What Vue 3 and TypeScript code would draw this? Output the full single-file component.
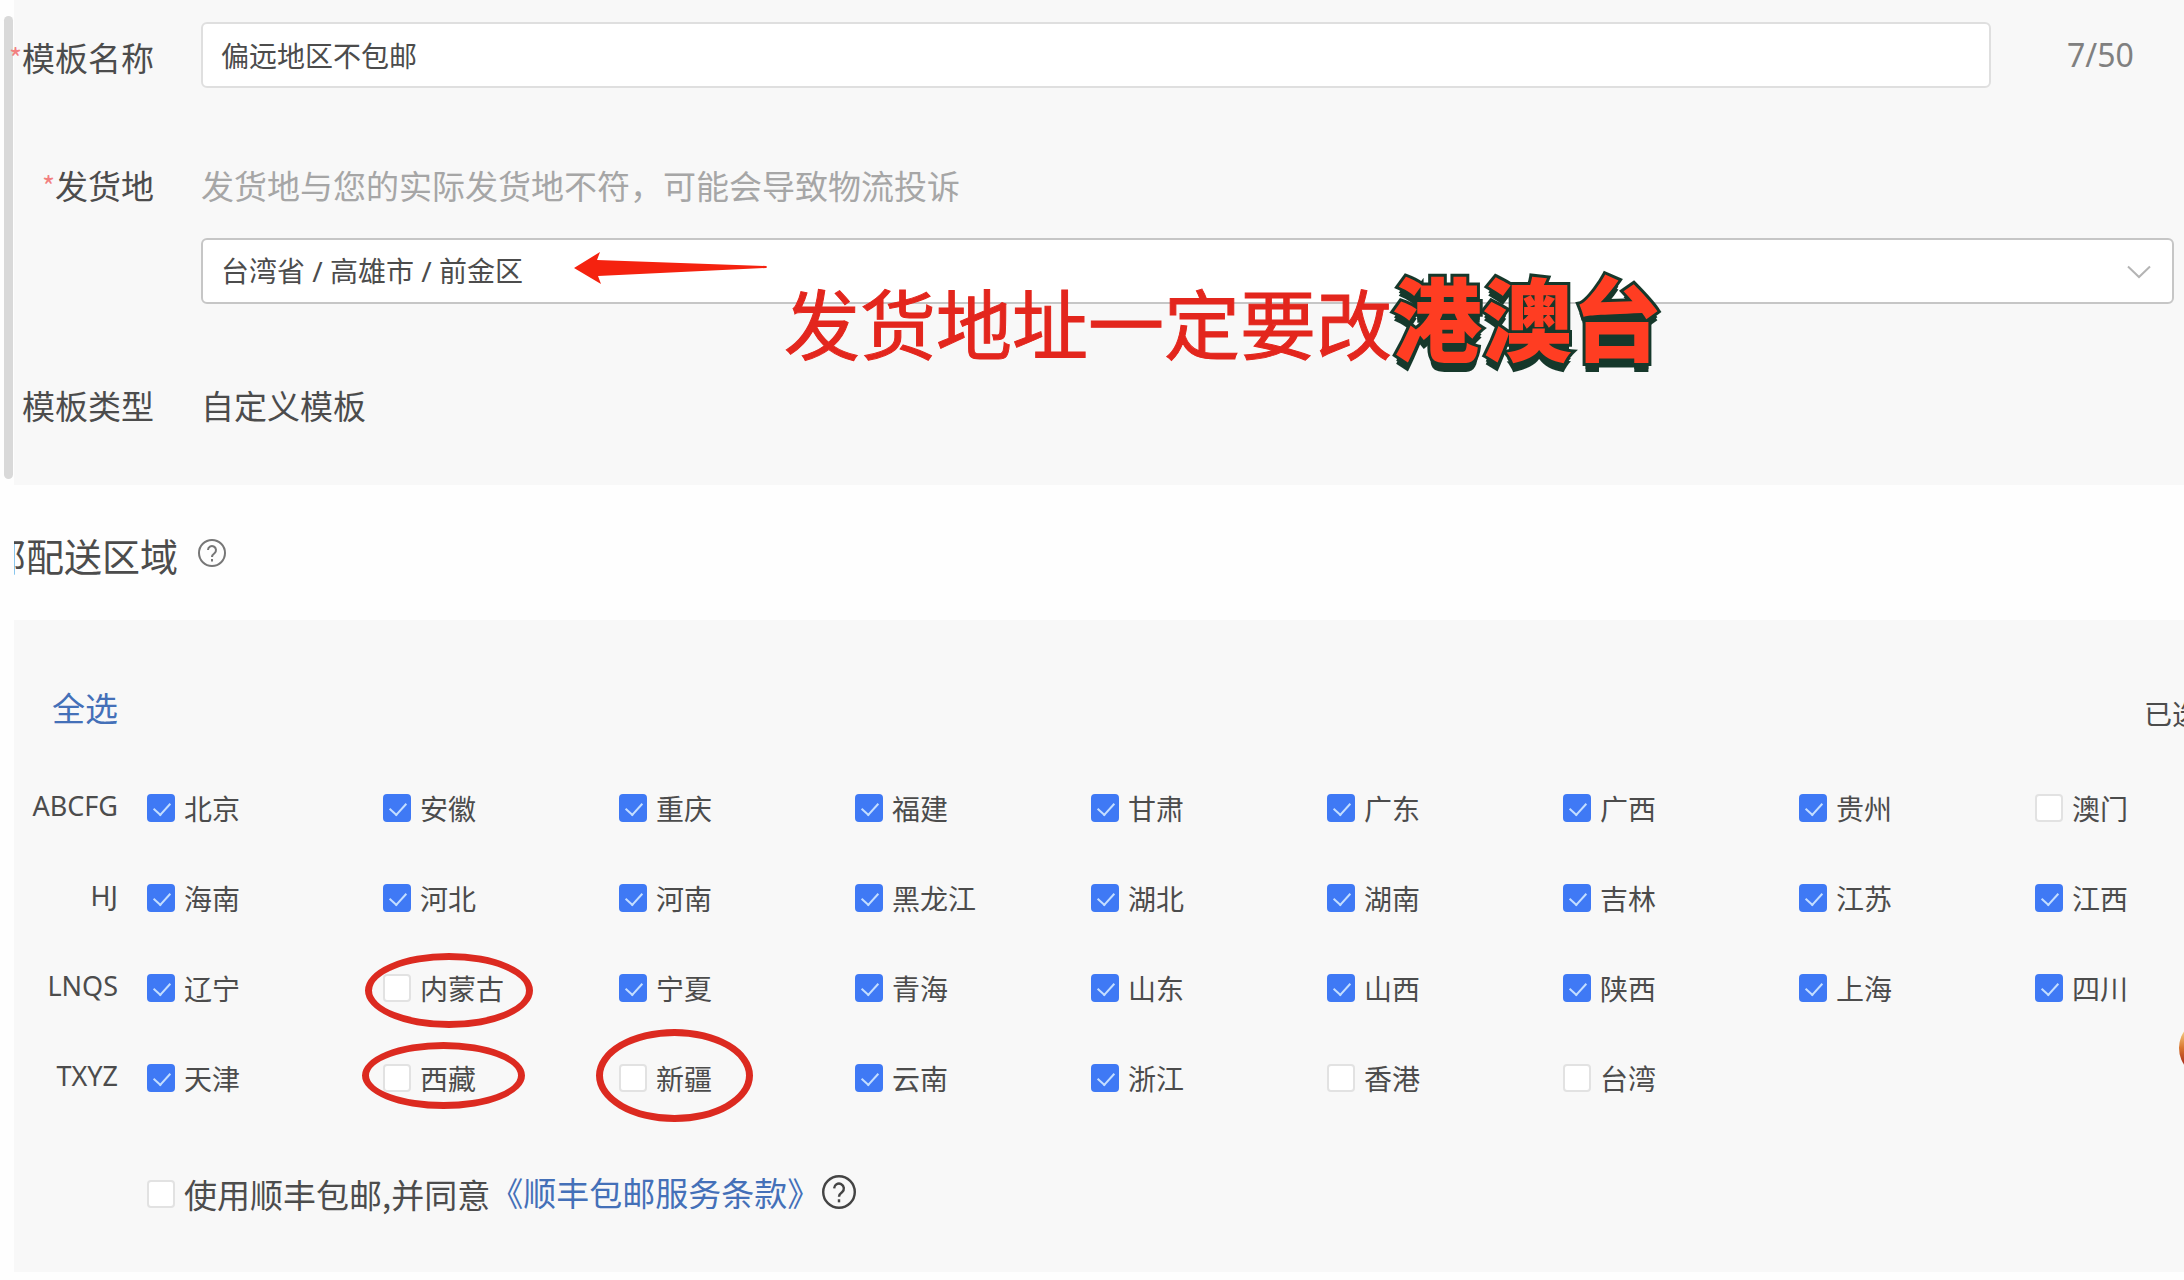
<script setup lang="ts">
import { ref } from 'vue'

interface Region {
  name: string
  checked: boolean
  mark?: string
}

interface RegionGroup {
  letters: string
  regions: Region[]
}

const on = (name: string): Region => ({ name, checked: true })
const off = (name: string, mark?: string): Region => ({ name, checked: false, mark })

const templateName = ref('偏远地区不包邮')
const origin = ref('台湾省 / 高雄市 / 前金区')
const useSf = ref(false)

const groups = ref<RegionGroup[]>([
  {
    letters: 'ABCFG',
    regions: [on('北京'), on('安徽'), on('重庆'), on('福建'), on('甘肃'), on('广东'), on('广西'), on('贵州'), off('澳门')],
  },
  {
    letters: 'HJ',
    regions: [on('海南'), on('河北'), on('河南'), on('黑龙江'), on('湖北'), on('湖南'), on('吉林'), on('江苏'), on('江西')],
  },
  {
    letters: 'LNQS',
    regions: [on('辽宁'), off('内蒙古', 'wide'), on('宁夏'), on('青海'), on('山东'), on('山西'), on('陕西'), on('上海'), on('四川')],
  },
  {
    letters: 'TXYZ',
    regions: [on('天津'), off('西藏', 'flat'), off('新疆', 'tall'), on('云南'), on('浙江'), off('香港'), off('台湾')],
  },
])

function selectAll() {
  groups.value.forEach((group) => group.regions.forEach((region) => (region.checked = true)))
}
</script>

<template>
  <main class="page">
    <div class="scrollbar"></div>

    <section class="panel basics">
      <div class="row name-row">
        <label class="label" for="tpl-name"><span class="star">*</span>模板名称</label>
        <input id="tpl-name" v-model="templateName" class="field" type="text" maxlength="50" />
        <span class="count">{{ templateName.length }}/50</span>
      </div>

      <div class="row origin-row">
        <label class="label" for="origin"><span class="star">*</span>发货地</label>
        <div class="origin">
          <p class="hint">发货地与您的实际发货地不符，可能会导致物流投诉</p>
          <div class="select-box">
            <select id="origin" v-model="origin" class="field">
              <option>台湾省 / 高雄市 / 前金区</option>
            </select>
            <svg class="chevron" viewBox="0 0 24 14" fill="none" stroke="#b4b4b4" stroke-width="2">
              <path d="M1 1.5 12 12 23 1.5" />
            </svg>
            <div class="note">
              <svg class="arrow" viewBox="0 0 194 32">
                <path d="M0 16 26 0 23 8 192 14Q194 15 192 16L24 24 27 32Z" fill="#f5220f" />
              </svg>
              <span class="note-text">发货地址一定要改</span>
              <strong class="note-art">港澳台</strong>
            </div>
          </div>
        </div>
      </div>

      <div class="row">
        <span class="label">模板类型</span>
        <span class="value">自定义模板</span>
      </div>
    </section>

    <header class="area-head">
      <h2 class="area-title"><span>邮配送区域</span></h2>
      <svg class="help" viewBox="0 0 28 28" fill="none" stroke="#777" stroke-width="2">
        <circle cx="14" cy="14" r="13" />
        <path d="M10 11a4 4 0 1 1 6.500 3.200C15 15.300 14 16 14 18" />
        <path d="M14 20v2.500" />
      </svg>
    </header>

    <section class="panel areas">
      <div class="toolbar">
        <button type="button" class="select-all" @click="selectAll">全选</button>
        <span class="selected">已选</span>
      </div>

      <div v-for="group in groups" :key="group.letters" class="group">
        <span class="letters">{{ group.letters }}</span>
        <label v-for="region in group.regions" :key="region.name" class="region">
          <input v-model="region.checked" type="checkbox" class="box" />
          <span>{{ region.name }}</span>
          <span v-if="region.mark" class="ring" :class="region.mark"></span>
        </label>
      </div>

      <div class="agree">
        <label class="agree-label">
          <input v-model="useSf" type="checkbox" class="box" />
          <span>使用顺丰包邮,并同意</span>
        </label>
        <a href="#" class="terms">《顺丰包邮服务条款》</a>
        <svg class="help large" viewBox="0 0 28 28" fill="none" stroke="#444" stroke-width="2">
          <circle cx="14" cy="14" r="13" />
          <path d="M10 11a4 4 0 1 1 6.500 3.200C15 15.300 14 16 14 18" />
          <path d="M14 20v2.500" />
        </svg>
      </div>
      <span class="float-ball"></span>
    </section>
  </main>
</template>

<style>
body {
  margin: 0;
  background: #fff;
}
</style>

<style scoped>
.page {
  position: relative;
  box-sizing: border-box;
  padding: 0 0 8px 14px;
  overflow: hidden;
  background: #fefefe;
  color: #4c4c4c;
  font-family: "Noto Sans CJK SC", "Noto Sans", sans-serif;
  font-size: 33px;
  line-height: 48px;
}

.page * {
  box-sizing: border-box;
}

.scrollbar {
  position: absolute;
  left: 4px;
  top: 16px;
  width: 9px;
  height: 463px;
  border-radius: 5px;
  background: #d9d9d9;
}

.panel {
  position: relative;
  background: #f8f8f8;
}

.basics {
  padding: 22px 10px 56px 0;
}

.row {
  display: flex;
  align-items: flex-start;
}

.label {
  display: flex;
  flex: none;
  justify-content: flex-end;
  width: 140px;
  margin-right: 47px;
  white-space: nowrap;
}

.star {
  color: #f28080;
  font-size: 28px;
}

.name-row {
  margin-bottom: 73px;
}

.name-row .label {
  padding-top: 11px;
}

.field {
  flex: 1;
  min-width: 0;
  height: 66px;
  margin: 0;
  padding: 0 18px;
  border: 2px solid #dfdfdf;
  border-radius: 6px;
  outline: none;
  background: #fff;
  color: #4c4c4c;
  font-family: "Noto Sans", "Noto Sans CJK SC", sans-serif;
  font-size: 28px;
}

.count {
  flex: none;
  width: 183px;
  padding-left: 76px;
  color: #808080;
  font-family: "Noto Sans", sans-serif;
  font-size: 32px;
  line-height: 66px;
}

.origin-row {
  margin-bottom: 77px;
}

.origin {
  flex: 1;
  min-width: 0;
}

.hint {
  margin: 0 0 29px;
  color: #a6a6a6;
}

.select-box {
  position: relative;
  display: flex;
}

.select-box .field {
  border-color: #c6c6c6;
  appearance: none;
}

.chevron {
  position: absolute;
  right: 23px;
  top: 27px;
  width: 24px;
  height: 14px;
}

.note {
  position: absolute;
  left: 373px;
  top: 14px;
  display: flex;
  align-items: flex-start;
  pointer-events: none;
  white-space: nowrap;
}

.arrow {
  width: 194px;
  height: 32px;
}

.note-text {
  margin: 19px 0 0 16px;
  color: #e3261d;
  font-size: 76px;
  line-height: 100px;
  -webkit-text-stroke: 1px #e3261d;
}

.note-art {
  margin-top: 13px;
  color: #ff3d22;
  font-size: 90px;
  font-weight: 900;
  line-height: 100px;
  paint-order: stroke fill;
  -webkit-text-stroke: 6px #16382b;
  text-shadow: 0 3px #16382b, 0 6px #16382b, 0 9px #16382b;
}

.area-head {
  display: flex;
  align-items: center;
  padding: 46px 0 41px;
}

.area-title {
  display: flex;
  justify-content: flex-end;
  width: 164px;
  margin: 0;
  overflow: hidden;
  font-size: 38px;
  font-weight: 400;
  white-space: nowrap;
}

.help {
  flex: none;
  width: 28px;
  height: 28px;
  margin: 0 0 4px 20px;
}

.areas {
  padding: 63px 0 54px;
}

.toolbar {
  display: flex;
  align-items: flex-end;
  justify-content: space-between;
  margin: 0 -16px 32px 38px;
}

.select-all {
  padding: 0;
  border: 0;
  background: none;
  color: #4470b8;
  font: inherit;
  cursor: pointer;
}

.selected {
  font-size: 28px;
  line-height: 36px;
}

.group {
  display: grid;
  grid-template-columns: 104px repeat(9, 236px);
  align-items: center;
  height: 90px;
  font-size: 28px;
}

.letters {
  padding-bottom: 4px;
  font-family: "Noto Sans", sans-serif;
  font-size: 27px;
  text-align: right;
}

.region {
  position: relative;
  display: flex;
  align-items: center;
  margin-left: 29px;
}

.box {
  position: relative;
  flex: none;
  width: 28px;
  height: 28px;
  margin: 0 9px 0 0;
  border: 2px solid #e2e2e2;
  border-radius: 4px;
  background: #fff;
  appearance: none;
}

.box:checked {
  border-color: #3f79f5;
  background: #3f79f5;
}

.box:checked::after {
  position: absolute;
  left: 8px;
  top: 3px;
  width: 8px;
  height: 14px;
  border: solid #c4deff;
  border-width: 0 2px 2px 0;
  content: "";
  transform: rotate(42deg);
}

.ring {
  position: absolute;
  border: 7px solid #dc2a20;
  border-radius: 50%;
  pointer-events: none;
}

.wide {
  left: -18px;
  top: -11px;
  width: 168px;
  height: 75px;
}

.flat {
  left: -21px;
  top: -12px;
  width: 163px;
  height: 67px;
}

.tall {
  left: -23px;
  top: -25px;
  width: 157px;
  height: 93px;
}

.agree {
  display: flex;
  align-items: center;
  height: 48px;
  margin: 47px 0 0 133px;
}

.agree-label {
  display: flex;
  align-items: center;
}

.terms {
  margin-bottom: 4px;
  color: #4470b8;
  text-decoration: none;
}

.large {
  width: 34px;
  height: 34px;
  margin-left: 2px;
}

.float-ball {
  position: absolute;
  right: -55px;
  top: 398px;
  width: 60px;
  height: 60px;
  border-radius: 50%;
  background: linear-gradient(#f6d28a 20%, #d9752e 50%, #a3271b 80%);
}
</style>
